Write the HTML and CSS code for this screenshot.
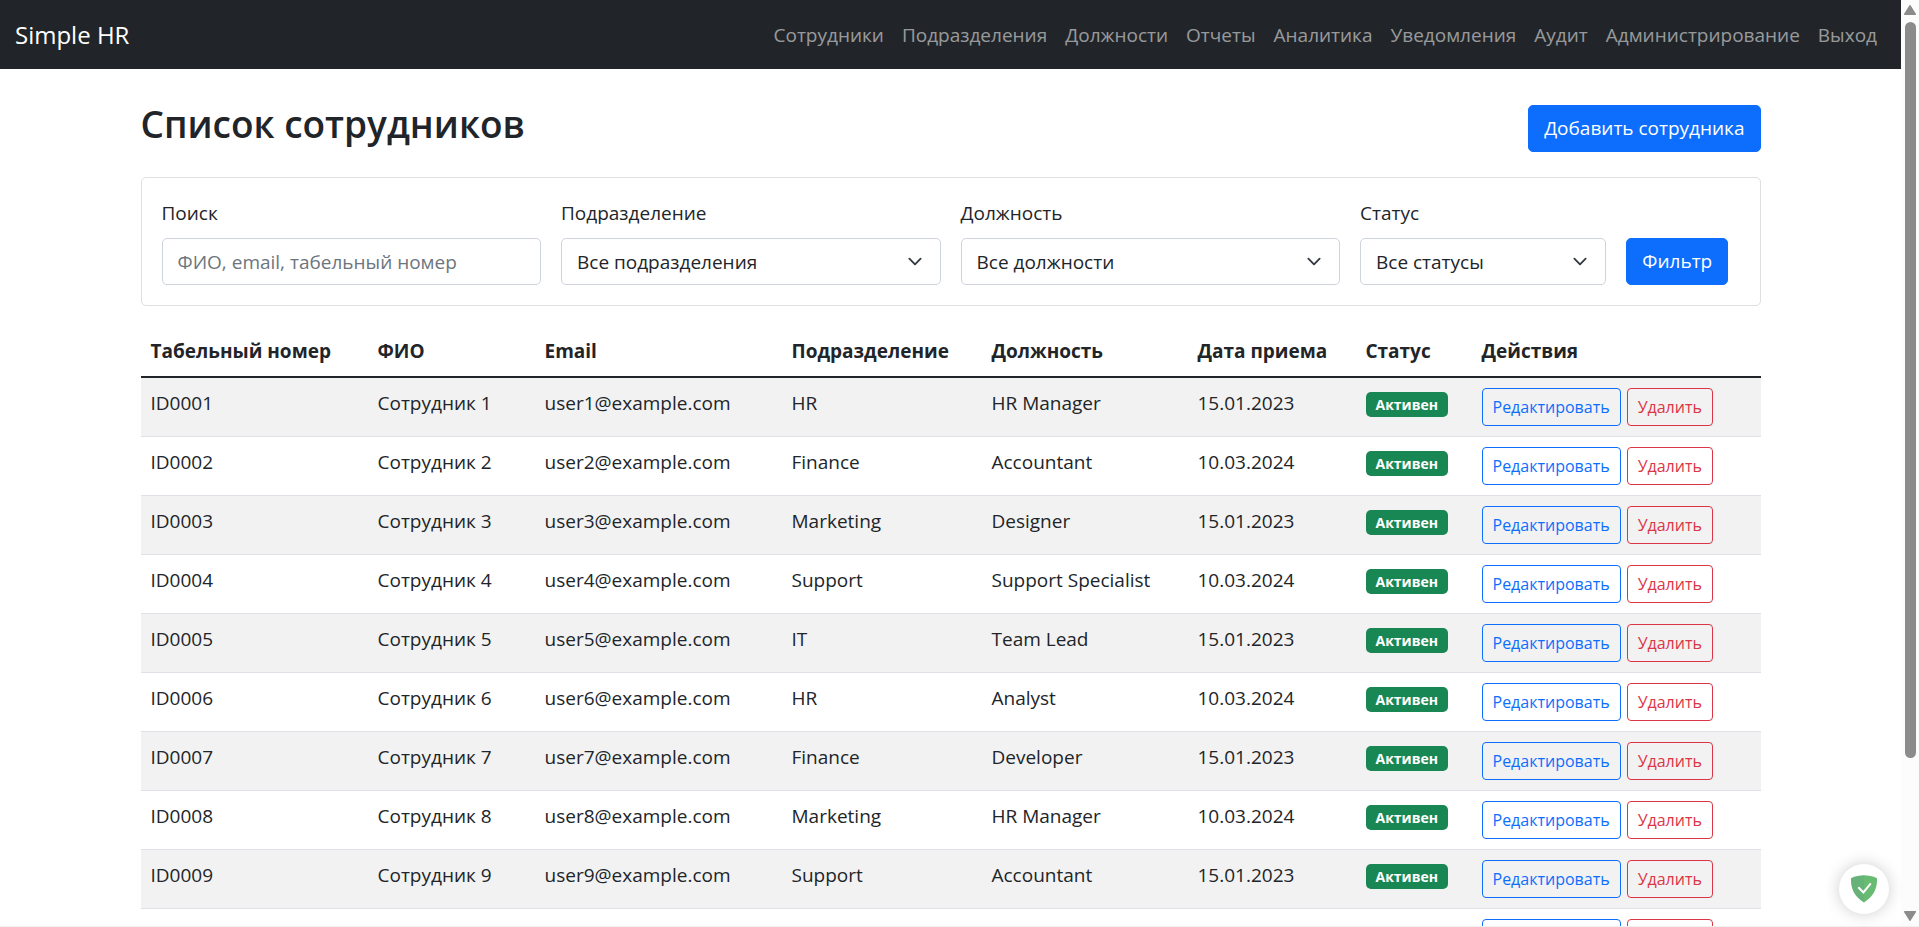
FILE: index.html
```html
<!DOCTYPE html>
<html lang="ru">
<head>
  <meta charset="utf-8">
  <meta name="viewport" content="width=device-width, initial-scale=1">
  <title>Simple HR</title>
  <link rel="stylesheet" href="styles.css">
</head>
<body>
  <div class="page">
    <header class="navbar">
      <a class="brand" href="#">Simple HR</a>
      <nav class="nav">
        <a class="nav-link" href="#">Сотрудники</a>
        <a class="nav-link" href="#">Подразделения</a>
        <a class="nav-link" href="#">Должности</a>
        <a class="nav-link" href="#">Отчеты</a>
        <a class="nav-link" href="#">Аналитика</a>
        <a class="nav-link" href="#">Уведомления</a>
        <a class="nav-link" href="#">Аудит</a>
        <a class="nav-link" href="#">Администрирование</a>
        <a class="nav-link" href="#">Выход</a>
      </nav>
    </header>

    <main class="container">
      <div class="page-head">
        <h1 class="title">Список сотрудников</h1>
        <a class="btn" href="#">Добавить сотрудника</a>
      </div>

      <form class="filters">
        <div class="field">
          <label for="search">Поиск</label>
          <input class="control" id="search" type="text" placeholder="ФИО, email, табельный номер">
        </div>
        <div class="field">
          <label for="department">Подразделение</label>
          <select class="control select" id="department"><option>Все подразделения</option></select>
        </div>
        <div class="field">
          <label for="position">Должность</label>
          <select class="control select" id="position"><option>Все должности</option></select>
        </div>
        <div class="field field-small">
          <label for="status">Статус</label>
          <select class="control select" id="status"><option>Все статусы</option></select>
        </div>
        <div class="submit">
          <button class="btn" type="submit">Фильтр</button>
        </div>
      </form>

      <table class="table">
        <colgroup>
          <col class="col-id"><col class="col-name"><col class="col-email"><col class="col-department">
          <col class="col-position"><col class="col-date"><col class="col-status"><col>
        </colgroup>
        <thead>
          <tr><th>Табельный номер</th><th>ФИО</th><th>Email</th><th>Подразделение</th><th>Должность</th><th>Дата приема</th><th>Статус</th><th>Действия</th></tr>
        </thead>
        <tbody>
          <tr><td>ID0001</td><td>Сотрудник 1</td><td>user1@example.com</td><td>HR</td><td>HR Manager</td><td>15.01.2023</td><td><span class="badge">Активен</span></td><td><div class="actions"><a class="action edit" href="#">Редактировать</a><button class="action delete" type="button">Удалить</button></div></td></tr>
          <tr><td>ID0002</td><td>Сотрудник 2</td><td>user2@example.com</td><td>Finance</td><td>Accountant</td><td>10.03.2024</td><td><span class="badge">Активен</span></td><td><div class="actions"><a class="action edit" href="#">Редактировать</a><button class="action delete" type="button">Удалить</button></div></td></tr>
          <tr><td>ID0003</td><td>Сотрудник 3</td><td>user3@example.com</td><td>Marketing</td><td>Designer</td><td>15.01.2023</td><td><span class="badge">Активен</span></td><td><div class="actions"><a class="action edit" href="#">Редактировать</a><button class="action delete" type="button">Удалить</button></div></td></tr>
          <tr><td>ID0004</td><td>Сотрудник 4</td><td>user4@example.com</td><td>Support</td><td>Support Specialist</td><td>10.03.2024</td><td><span class="badge">Активен</span></td><td><div class="actions"><a class="action edit" href="#">Редактировать</a><button class="action delete" type="button">Удалить</button></div></td></tr>
          <tr><td>ID0005</td><td>Сотрудник 5</td><td>user5@example.com</td><td>IT</td><td>Team Lead</td><td>15.01.2023</td><td><span class="badge">Активен</span></td><td><div class="actions"><a class="action edit" href="#">Редактировать</a><button class="action delete" type="button">Удалить</button></div></td></tr>
          <tr><td>ID0006</td><td>Сотрудник 6</td><td>user6@example.com</td><td>HR</td><td>Analyst</td><td>10.03.2024</td><td><span class="badge">Активен</span></td><td><div class="actions"><a class="action edit" href="#">Редактировать</a><button class="action delete" type="button">Удалить</button></div></td></tr>
          <tr><td>ID0007</td><td>Сотрудник 7</td><td>user7@example.com</td><td>Finance</td><td>Developer</td><td>15.01.2023</td><td><span class="badge">Активен</span></td><td><div class="actions"><a class="action edit" href="#">Редактировать</a><button class="action delete" type="button">Удалить</button></div></td></tr>
          <tr><td>ID0008</td><td>Сотрудник 8</td><td>user8@example.com</td><td>Marketing</td><td>HR Manager</td><td>10.03.2024</td><td><span class="badge">Активен</span></td><td><div class="actions"><a class="action edit" href="#">Редактировать</a><button class="action delete" type="button">Удалить</button></div></td></tr>
          <tr><td>ID0009</td><td>Сотрудник 9</td><td>user9@example.com</td><td>Support</td><td>Accountant</td><td>15.01.2023</td><td><span class="badge">Активен</span></td><td><div class="actions"><a class="action edit" href="#">Редактировать</a><button class="action delete" type="button">Удалить</button></div></td></tr>
          <tr><td></td><td></td><td></td><td></td><td></td><td></td><td></td><td><div class="actions"><a class="action edit" href="#">Редактировать</a><button class="action delete" type="button">Удалить</button></div></td></tr>
        </tbody>
      </table>
    </main>
  </div>

  <div class="scrollbar" aria-hidden="true">
    <svg class="arrow" width="14" height="12" viewBox="0 0 14 12"><path d="M7 1.8 12.2 10.2H1.8z" fill="#8b8b8b" stroke="#8b8b8b" stroke-width="1.6" stroke-linejoin="round"/></svg>
    <div class="track"><div class="thumb"></div></div>
    <svg class="arrow" width="14" height="12" viewBox="0 0 14 12"><path d="M7 10.2 12.2 1.8H1.8z" fill="#8b8b8b" stroke="#8b8b8b" stroke-width="1.6" stroke-linejoin="round"/></svg>
  </div>

  <button class="shield" type="button" aria-label="Защита">
    <svg width="26" height="28" viewBox="0 0 26 28">
      <path d="M13 .3C9 .3 4 1.200 0 3.200c0 4.600-.5 16.200 13 24.300z" fill="#67b279"/>
      <path d="M13 .3c4 0 9 .9 13 2.900 0 4.600.5 16.200-13 24.300z" fill="#68bc71"/>
      <path d="M7.300 12.200 12.400 17.500 19.800 8.300" fill="none" stroke="#fff" stroke-width="2"/>
    </svg>
  </button>
</body>
</html>
```
FILE: styles.css
```css
* {
  box-sizing: border-box;
}

body {
  display: flex;
  height: 100vh;
  margin: 0;
  overflow: hidden;
  border-bottom: 1px solid #f0f0f0;
  background: #fff;
  color: #212529;
  font-family: "Open Sans", "Noto Sans", sans-serif;
  font-size: 19px;
  line-height: 30px;
}

a {
  text-decoration: none;
}

button,
input,
select {
  font: inherit;
}

.page {
  flex: 1;
  min-width: 0;
}

.navbar {
  display: flex;
  align-items: center;
  justify-content: space-between;
  padding: 10px 15px;
  background: #212529;
}

.brand {
  padding: 6px 0;
  color: #fff;
  font-size: 24px;
  line-height: 37px;
}

.nav {
  display: flex;
}

.nav-link {
  padding: 9px;
  color: rgba(255, 255, 255, 0.55);
}

.container {
  max-width: 1650px;
  margin: 30px auto 0;
  padding: 0 15px;
}

.page-head {
  display: flex;
  align-items: center;
  justify-content: space-between;
  margin-bottom: 20px;
}

.title {
  margin: 0 0 8px;
  font-size: 37px;
  font-weight: 600;
  line-height: 50px;
}

.btn {
  display: inline-block;
  padding: 8px 15px;
  border: 1px solid #0d6efd;
  border-radius: 5px;
  background: #0d6efd;
  color: #fff;
  line-height: 29px;
}

.filters {
  display: grid;
  grid-template-columns: repeat(12, 1fr);
  gap: 20px;
  margin-bottom: 20px;
  padding: 20px;
  border: 1px solid #dfdfdf;
  border-radius: 5px;
}

.field {
  display: flex;
  flex-direction: column;
  grid-column: span 3;
  gap: 10px;
}

.field-small {
  grid-column: span 2;
}

.submit {
  align-self: end;
  display: flex;
}

.control {
  width: 100%;
  height: 47px;
  padding: 8px 15px;
  border: 1px solid #ced4da;
  border-radius: 5px;
  background-color: #fff;
  color: #212529;
}

.control::placeholder {
  color: #6c757d;
  opacity: 1;
}

.select {
  appearance: none;
  background-image: url("data:image/svg+xml,%3Csvg xmlns='http://www.w3.org/2000/svg' viewBox='0 0 16 16'%3E%3Cpath fill='none' stroke='%23343a40' stroke-linecap='round' stroke-linejoin='round' stroke-width='2' d='M2 5l6 6 6-6'/%3E%3C/svg%3E");
  background-repeat: no-repeat;
  background-position: right 15px center;
  background-size: 20px 15px;
}

.table {
  width: 100%;
  border-collapse: separate;
  border-spacing: 0;
  table-layout: fixed;
}

.col-id {
  width: 227px;
}

.col-name {
  width: 167px;
}

.col-email {
  width: 247px;
}

.col-department {
  width: 200px;
}

.col-position {
  width: 206px;
}

.col-date {
  width: 168px;
}

.col-status {
  width: 116px;
}

.table th,
.table td {
  padding: 10px;
  text-align: left;
  vertical-align: top;
}

.table th {
  border-bottom: 2px solid #212529;
  font-weight: 700;
}

.table td {
  border-bottom: 1px solid #dee2e6;
}

.table tbody tr:nth-child(odd) {
  background: #f2f2f2;
}

.badge {
  display: inline-block;
  padding: 5px 10px;
  border-radius: 5px;
  background: #198754;
  color: #fff;
  font-size: 14px;
  font-weight: 700;
  line-height: 15px;
}

.actions {
  display: flex;
  gap: 6px;
}

.action {
  padding: 5px 10px;
  border: 1px solid;
  border-radius: 4px;
  background: transparent;
  font-size: 16px;
  line-height: 26px;
}

.edit {
  color: #0d6efd;
}

.delete {
  color: #dc3545;
}

.scrollbar {
  display: flex;
  flex-direction: column;
  align-items: center;
  width: 18px;
  padding: 4px 0;
  gap: 6px;
  background: #fcfcfc;
}

.track {
  flex: 1;
}

.thumb {
  width: 11px;
  height: 83.5%;
  border-radius: 6px;
  background: #8b8b8b;
}

.shield {
  position: fixed;
  right: 30px;
  bottom: 13px;
  display: grid;
  place-items: center;
  width: 50px;
  height: 50px;
  padding: 0;
  border: 0;
  border-radius: 50%;
  background: #fff;
  box-shadow: 0 0 16px rgba(0, 0, 0, 0.2);
}
```
